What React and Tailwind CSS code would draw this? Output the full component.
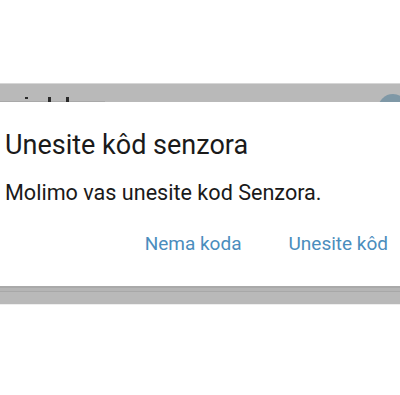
export default function App() {
  return (
    <div className="flex h-[395px] w-[400px] flex-col bg-white font-['Roboto','Noto_Sans',sans-serif]">
      <div className="h-[83px] bg-white" />
      <div className="h-px bg-[#d6d6d6]" />
      {/* background screen peeking above the dialog: only the tops of its letters show */}
      <div className="relative h-[18px] overflow-hidden bg-[#b9b9b9]">
        <div className="absolute bottom-0 left-0 h-px w-[105px] bg-[#a9a9a9]" />
        <div className="absolute left-[25px] top-[13px] h-[2px] w-[3px] bg-[#2a2a2a]" />
        <div className="absolute left-[48px] top-[13px] h-[5px] w-[3px] bg-[#2a2a2a]" />
        <div className="absolute left-[66px] top-[13px] h-[5px] w-[3px] bg-[#2a2a2a]" />
        <div className="absolute left-[378px] top-[10px] h-[30px] w-[30px] rounded-full bg-[#7f98a6]" />
      </div>
      <div className="flex flex-col bg-white pb-[28px] pt-[27px]">
        <h1 className="pl-[5px] text-[27px] leading-[32px] text-[#1a1a1a]">Unesite kôd senzora</h1>
        <p className="mt-[18px] pl-[5px] text-[21.6px] leading-[28px] text-[#1a1a1a]">
          Molimo vas unesite kod Senzora.
        </p>
        <div className="mt-[23px] flex justify-end gap-[47px] pr-[12px] text-[19px] leading-[28px] text-[#4a8dbd]">
          <button>Nema koda</button>
          <button>Unesite kôd</button>
        </div>
      </div>
      <div className="h-[2px] bg-[#a9a9a9]" />
      <div className="h-[3px] bg-[#b5b5b5]" />
      <div className="h-px bg-[#a8a8a8]" />
      <div className="h-[12px] bg-[#b9b9b9]" />
      <div className="h-px bg-[#eeeeee]" />
      <div className="flex-1 bg-white" />
    </div>
  )
}
